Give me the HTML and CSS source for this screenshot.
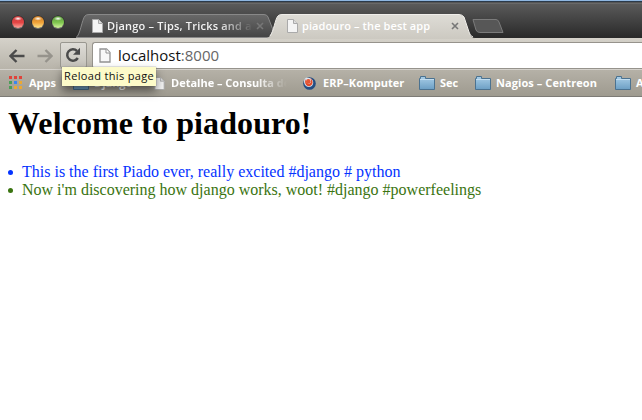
FILE: index.html
```html
<!DOCTYPE html>
<html lang="en">
<head>
<meta charset="utf-8">
<title>piadouro - the best app</title>
<link rel="stylesheet" href="styles.css">
</head>
<body>
<svg class="defs" width="0" height="0">
  <defs>
    <linearGradient id="folderFill" x2="0" y2="1"><stop stop-color="#a9cee8"/><stop offset="1" stop-color="#6c9fc4"/></linearGradient>
    <linearGradient id="tabFill" x2="0" y2="1"><stop stop-color="#dedcd6"/><stop offset="1" stop-color="#ccc9c1"/></linearGradient>
    <linearGradient id="idleFill" x2="0" y2="1"><stop stop-color="#696969"/><stop offset="1" stop-color="#444"/></linearGradient>
    <symbol id="folder" viewBox="0 0 16 14"><path d="M.5 2.500h1v-2h5v2h9v11H.5z" fill="url(#folderFill)" stroke="#4b7290"/><path d="M1 3.500h14" stroke="#c3def0"/></symbol>
    <symbol id="page" viewBox="0 0 11 14"><path d="M.5.5h6l4 4v9H.5z" fill="#f4f4f4" stroke="#aaa"/><path d="M6.500.5v4h4" fill="#ddd" stroke="#aaa"/></symbol>
  </defs>
</svg>
<header class="titlebar">
  <div class="lights"><i class="light red"></i><i class="light amber"></i><i class="light green"></i></div>
  <div class="tab idle">
    <svg class="shape" width="200" height="24" viewBox="0 0 200 24"><path d="M0 23.500C4 22 6 5 9 2Q10 .5 13 .5H188Q191 .5 192 3L200 23.500z" fill="url(#idleFill)" stroke="#888"/></svg>
    <svg class="icon" width="11" height="14"><use href="#page"/></svg>
    <span class="label">Django – Tips, Tricks and a</span>
    <svg class="close" width="8" height="8" viewBox="0 0 8 8"><path d="M1 1l6 6M7 1L1 7"/></svg>
  </div>
  <div class="tab active">
    <svg class="shape" width="208" height="25" viewBox="0 0 208 25"><path d="M0 25V24C6 23 8 5 11 2Q12 .5 15 .5H192Q195 .5 197 3L202 18Q204 24 208 24V25z" fill="url(#tabFill)"/><path d="M3 22C7 17 8 5 11 2Q12 .5 15 .5H192Q195 .5 197 3L202 18Q203 22 206 23" fill="none" stroke="#efede9"/></svg>
    <svg class="icon" width="11" height="14"><use href="#page"/></svg>
    <span class="label">piadouro – the best app</span>
    <svg class="close" width="8" height="8" viewBox="0 0 8 8"><path d="M1 1l6 6M7 1L1 7"/></svg>
  </div>
  <svg class="newtab" width="32" height="15" viewBox="0 0 32 15"><path d="M1 .5H24Q26 .5 27 3L31 13.500H8Q5 13.500 4 11z" fill="#575757" stroke="#7b7b7b"/></svg>
</header>
<nav class="toolbar">
  <svg class="arrow" width="16" height="14" viewBox="0 0 16 14"><path d="M7.500 1L1.500 7l6 6M2 7h13.500"/></svg>
  <svg class="arrow forward" width="16" height="14" viewBox="0 0 16 14"><path d="M8.500 1l6 6-6 6M14 7H.5"/></svg>
  <div class="reload">
    <svg width="16" height="16" viewBox="0 0 16 16"><path d="M12.800 11A5.700 5.700 0 1 1 12 4" fill="none" stroke="#4a4a4a" stroke-width="2.500"/><path d="M15 .7v7H8z" fill="#4a4a4a"/></svg>
    <div class="tooltip">Reload this page</div>
  </div>
  <div class="omnibox">
    <svg width="12" height="15" viewBox="0 0 12 15"><path d="M1 1h6.500L11 4.500V14H1z" fill="#f8f8f8" stroke="#929292" stroke-width="1.300"/><path d="M7 1v4h4" fill="#fff" stroke="#929292"/></svg>
    <span class="url">localhost<span class="port">:8000</span></span>
  </div>
</nav>
<nav class="bookmarks">
  <div class="mark apps">
    <svg width="13" height="14" viewBox="0 0 13 14"><path d="M0 0h3v3H0zM5 0h3v3H5zM10 0h3v3h-3z" fill="#e0433a"/><path d="M0 5h3v3H0zM0 10h3v3H0z" fill="#4b9d57"/><path d="M5 5h3v3H5z" fill="#3c86ed"/><path d="M5 10h3v3H5zM10 5h3v3h-3zM10 10h3v3h-3z" fill="#eba832"/></svg>
    <span>Apps</span>
  </div>
  <div class="mark django"><svg width="16" height="14"><use href="#folder"/></svg><span>Django</span></div>
  <div class="mark detalhe"><svg width="11" height="13"><use href="#page"/></svg><span>Detalhe – Consulta de</span></div>
  <div class="mark erp">
    <svg width="13" height="13" viewBox="0 0 13 13"><circle cx="6.500" cy="6.500" r="6.300" fill="#244d82"/><path d="M3 .8C9 0 11 4 10 7C9 11 3 11 1.500 7C.5 4 1 2 3 .8z" fill="#dce5ef"/><path d="M2.500 2C1 7 4 10 7 9C11 7 10 3 7 1C9 4 8 6.500 6 6.500C4 6.500 3 5 2.500 2z" fill="#e24d2b"/><circle cx="5.300" cy="4.200" r="2.300" fill="#e65532"/></svg>
    <span>ERP–Komputer</span>
  </div>
  <div class="mark sec"><svg width="16" height="14"><use href="#folder"/></svg><span>Sec</span></div>
  <div class="mark nagios"><svg width="16" height="14"><use href="#folder"/></svg><span>Nagios – Centreon</span></div>
  <div class="mark last"><svg width="16" height="14"><use href="#folder"/></svg><span>A</span></div>
</nav>
<main>
  <h1>Welcome to piadouro!</h1>
  <ul>
    <li class="blue"><span>This is the first Piado ever, really excited #django # python</span></li>
    <li class="olive"><span>Now i'm discovering how django works, woot! #django #powerfeelings</span></li>
  </ul>
</main>
</body>
</html>
```
FILE: styles.css
```css
* { box-sizing: border-box; }
body { margin: 0; width: 642px; height: 420px; overflow: hidden; background: #fff; font-family: "Open Sans", "Noto Sans", sans-serif; }
svg { display: block; flex: none; }
.defs { position: absolute; }

.titlebar { display: flex; height: 38px; border-top: 1px solid #8eb6e0; background: linear-gradient(#234060 0, #333 1px, #777 2px, #5a5a5a 3px, #2a2a2a 36px); }
.lights { display: flex; gap: 8px; width: 76px; padding: 15px 0 0 12px; flex: none; }
.light { width: 12px; height: 12px; border-radius: 50%; box-shadow: 0 1px 0 #777, 0 0 0 .5px #222; }
.red { background: radial-gradient(ellipse 4px 2px at 50% 22%, #fff 0, transparent 100%), linear-gradient(#c93b3b, #e44545 55%, #ffaaa0); }
.amber { background: radial-gradient(ellipse 4px 2px at 50% 22%, #fff 0, transparent 100%), linear-gradient(#c87820, #f0a33a 55%, #ffe890); }
.green { background: radial-gradient(ellipse 4px 2px at 50% 22%, #fff 0, transparent 100%), linear-gradient(#58963a, #80c750 55%, #d5f7a0); }

.tab { position: relative; display: flex; align-items: center; flex: none; height: 24px; margin-top: 13px; font-size: 11px; }
.tab > * { position: relative; }
.tab .shape { position: absolute; left: 0; top: 0; }
.tab .label { white-space: nowrap; overflow: hidden; line-height: 16px; color: #f2f2f2; font-weight: 600; }
.idle { width: 191px; padding-left: 16px; }
.idle .label { width: 148px; margin-left: 4px; letter-spacing: .2px; mask-image: linear-gradient(90deg, #000 112px, transparent 146px); }
.close { stroke: #777; stroke-width: 1.6; fill: none; }
.idle .close { margin-left: 1px; }
.active { width: 207px; padding-left: 20px; }
.active .label { width: 149px; margin-left: 4px; color: #fff; letter-spacing: .1px; }
.newtab { margin: 18px 0 0 -2px; }

.toolbar { display: flex; height: 31px; padding-left: 9px; background: linear-gradient(#d5d2ca, #b8b4aa); }
.arrow { margin: 11px 12px 0 0; fill: none; stroke: #4b4b4b; stroke-width: 2.4; }
.forward { margin-right: 7px; stroke: #96938c; }
.reload { position: relative; width: 27px; height: 26px; margin: 4px 5px 0 0; padding: 4px; border: 1px solid #999790; border-radius: 2px; background: linear-gradient(#dedcd7, #c5c2ba); flex: none; }
.tooltip { position: absolute; z-index: 3; left: 1px; top: 24px; width: 94px; height: 19px; padding-left: 2px; background: #fdfbc9; color: #111; font-size: 11px; line-height: 18px; letter-spacing: .34px; white-space: nowrap; box-shadow: 0 5px 10px rgba(0,0,0,.5), 0 0 1px #777; }
.omnibox { display: flex; flex: 1; height: 27px; margin-top: 4px; padding: 5px 0 0 6px; border: 1px solid #96938c; border-right: 0; border-radius: 3px 0 0 3px; background: #fff; }
.url { margin-left: 7px; line-height: 15px; font-size: 15px; color: #111; white-space: nowrap; }
.port { color: #666; }

.bookmarks { display: flex; height: 28px; padding-left: 9px; background: linear-gradient(#b5b1a7, #9e9a8f); border-top: 1px solid #d4d1cb; border-bottom: 1px solid #7d7b76; overflow: hidden; }
.mark { display: flex; align-items: center; gap: 5px; flex: none; height: 26px; color: #fff; font-size: 11px; font-weight: 700; white-space: nowrap; }
.mark span { line-height: 16px; }
.apps { width: 64px; gap: 7px; }
.django { width: 81px; }
.detalhe { width: 149px; gap: 6px; }
.detalhe span { width: 116px; overflow: hidden; mask-image: linear-gradient(90deg, #000 84px, transparent 116px); }
.erp { width: 116px; gap: 7px; }
.sec { width: 56px; }
.nagios { width: 140px; letter-spacing: .08px; }

main { padding: 8px; }
h1 { margin: 0; font: bold 32px/37px "Liberation Serif", serif; letter-spacing: .1px; color: #000; }
ul { margin: 21px 0 0; padding: 0 0 0 14px; font: 16px/18px "Liberation Serif", serif; }
li { list-style: none; display: flex; align-items: center; white-space: nowrap; }
li::before { content: ""; width: 5px; height: 5px; margin: 1px 9px 0 -14px; border-radius: 50%; background: currentColor; }
.blue { color: #0433ff; }
.olive { color: #3a7410; }
```
